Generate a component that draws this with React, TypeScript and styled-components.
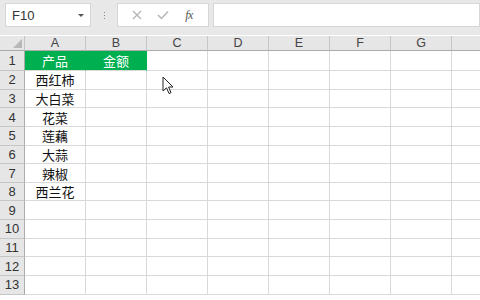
import React from "react";
import styled, { createGlobalStyle } from "styled-components";

const Global = createGlobalStyle`
  html, body { margin: 0; padding: 0; background: #ffffff; overflow: hidden; }
  body { width: 480px; height: 300px; font-family: "Noto Sans CJK SC", "Noto Sans", sans-serif; }
`;

const Page = styled.div`
  position: relative;
  width: 480px;
  height: 300px;
  background: #ffffff;
  overflow: hidden;
`;

const Toolbar = styled.div`
  display: flex;
  align-items: center;
  height: 35px;
  padding: 0 0 5px 5px;
  box-sizing: border-box;
  background: #e8e8e8;
  gap: 0;
`;

const Box = styled.div<{ $w?: number; $grow?: boolean }>`
  display: flex;
  align-items: center;
  height: 24px;
  box-sizing: border-box;
  background: #ffffff;
  border: 1px solid #d6d6d6;
  ${(p) => (p.$w ? `width: ${p.$w}px;` : "")}
  ${(p) => (p.$grow ? "flex: 1;" : "")}
`;

const NameText = styled.span`
  flex: 1;
  padding-left: 6px;
  font-family: "Liberation Sans", sans-serif;
  font-size: 13px;
  color: #333333;
`;

const Caret = styled.span`
  width: 0;
  height: 0;
  margin-right: 6px;
  border-left: 3px solid transparent;
  border-right: 3px solid transparent;
  border-top: 3px solid #555555;
`;

const Grip = styled.div`
  width: 26px;
  display: flex;
  flex-direction: column;
  align-items: center;
  gap: 2px;
  & > span {
    width: 1px;
    height: 1px;
    background: #8a8a8a;
  }
`;

const FxGroup = styled(Box)`
  justify-content: space-around;
  padding: 0 6px;
  margin-right: 4px;
`;

const IconSlot = styled.span`
  display: flex;
  align-items: center;
  justify-content: center;
  width: 20px;
  height: 20px;
`;

const Fx = styled.span`
  font-family: "Liberation Serif", serif;
  font-style: italic;
  font-size: 12px;
  color: #555555;
  letter-spacing: -0.5px;
`;

const Sheet = styled.div`
  display: grid;
  grid-template-columns: 25px repeat(8, 61px);
  grid-template-rows: 15px 20px repeat(12, 18.65px);
  margin-top: 1px;
`;

const Corner = styled.div`
  position: relative;
  background: #e6e6e6;
  border-right: 1px solid #c4c4c4;
  border-bottom: 1px solid #ababab;
  box-sizing: border-box;
`;

const CornerTri = styled.div`
  position: absolute;
  right: 2px;
  bottom: 2px;
  width: 0;
  height: 0;
  border-left: 9px solid transparent;
  border-bottom: 9px solid #b7b7b7;
`;

const ColHead = styled.div`
  display: flex;
  align-items: center;
  justify-content: center;
  background: #e6e6e6;
  border-right: 1px solid #c6c6c6;
  border-bottom: 1px solid #ababab;
  box-sizing: border-box;
  font-family: "Liberation Sans", sans-serif;
  font-size: 12.5px;
  color: #444444;
`;

const RowHead = styled.div`
  display: flex;
  align-items: center;
  justify-content: center;
  background: #e6e6e6;
  border-right: 1px solid #ababab;
  border-bottom: 1px solid #c6c6c6;
  box-sizing: border-box;
  font-family: "Liberation Sans", sans-serif;
  font-size: 13px;
  color: #333333;
`;

const Cell = styled.div<{ $head?: boolean }>`
  display: flex;
  align-items: center;
  justify-content: center;
  box-sizing: border-box;
  border-right: 1px solid ${(p) => (p.$head ? "#00b050" : "#d9d9d9")};
  border-bottom: 1px solid #d9d9d9;
  background: ${(p) => (p.$head ? "#00b050" : "#ffffff")};
  color: ${(p) => (p.$head ? "#ffffff" : "#111111")};
  font-family: "Noto Sans CJK SC", sans-serif;
  font-size: 13px;
  line-height: 1;
  white-space: nowrap;
`;

const Cursor = styled.svg`
  position: absolute;
  left: 162px;
  top: 76px;
`;

const cols = ["A", "B", "C", "D", "E", "F", "G", ""];
const data: string[][] = [
  ["产品", "金额"],
  ["西红柿"],
  ["大白菜"],
  ["花菜"],
  ["莲藕"],
  ["大蒜"],
  ["辣椒"],
  ["西兰花"],
  [],
  [],
  [],
  [],
  [],
];

export default function App() {
  return (
    <Page>
      <Global />
      <Toolbar>
        <Box $w={86}>
          <NameText>F10</NameText>
          <Caret />
        </Box>
        <Grip>
          <span />
          <span />
          <span />
        </Grip>
        <FxGroup $w={92}>
          <IconSlot>
            <svg width="10" height="10" viewBox="0 0 10 10">
              <path d="M1 1 L9 9 M9 1 L1 9" stroke="#b5b5b5" strokeWidth="1.3" fill="none" />
            </svg>
          </IconSlot>
          <IconSlot>
            <svg width="12" height="10" viewBox="0 0 12 10">
              <path d="M1 5 L4.5 8.5 L11 1.5" stroke="#b5b5b5" strokeWidth="1.5" fill="none" />
            </svg>
          </IconSlot>
          <IconSlot>
            <Fx>fx</Fx>
          </IconSlot>
        </FxGroup>
        <Box $grow />
      </Toolbar>
      <Sheet>
        <Corner>
          <CornerTri />
        </Corner>
        {cols.map((c, i) => (
          <ColHead key={i}>{c}</ColHead>
        ))}
        {data.map((row, r) => (
          <React.Fragment key={r}>
            <RowHead>{r + 1}</RowHead>
            {cols.map((_, c) => (
              <Cell key={c} $head={r === 0 && c < 2}>
                {row[c] ?? ""}
              </Cell>
            ))}
          </React.Fragment>
        ))}
      </Sheet>
      <Cursor width="12" height="19" viewBox="0 0 12 19">
        <path d="M1 1 L1 15 L4.5 11.8 L7 17.5 L9 16.6 L6.6 11 L11 11 Z" fill="#ffffff" stroke="#222222" strokeWidth="1" strokeLinejoin="round" />
      </Cursor>
    </Page>
  );
}
